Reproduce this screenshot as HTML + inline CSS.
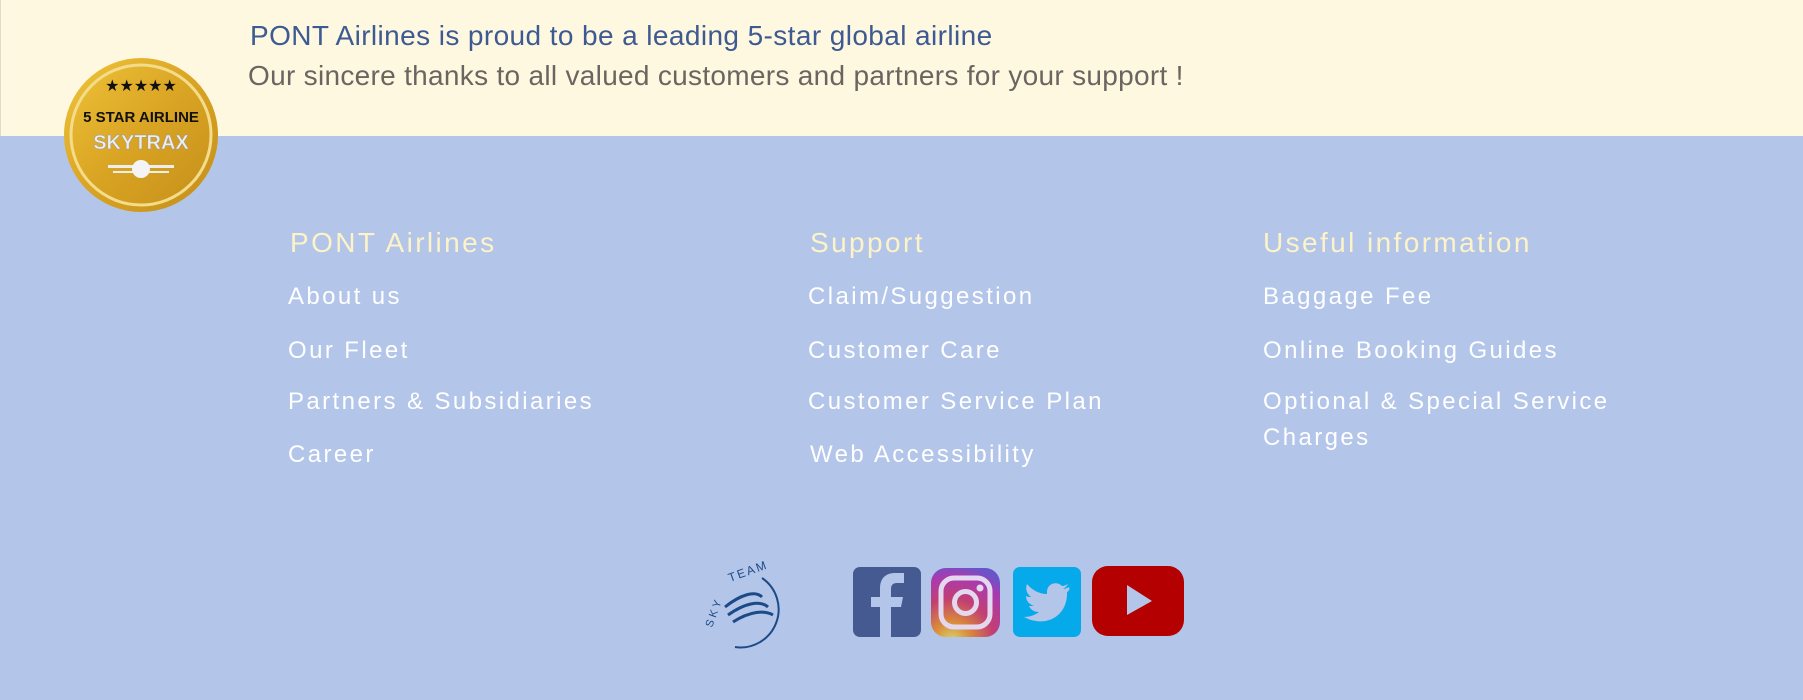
<!DOCTYPE html>
<html><head><meta charset="utf-8"><style>
body{margin:0;width:1803px;height:700px;background:#b3c5e8;font-family:"Liberation Sans",sans-serif;position:relative;overflow:hidden}
.top{position:absolute;left:0;top:0;width:1803px;height:136px;background:#fef8e0;border-left:1px solid #e0dccc;box-sizing:border-box}
.t{position:absolute;white-space:nowrap}
.h{color:#fdf3c8;font-size:28px;letter-spacing:2.4px}
.l{color:#fff;font-size:24px;letter-spacing:2.4px}
</style></head><body>
<div class="top"></div>
<div class="t" style="left:250px;top:20px;font-size:28px;color:#3e5a92;letter-spacing:0.4px">PONT Airlines is proud to be a leading 5-star global airline</div>
<div class="t" style="left:248px;top:60px;font-size:28px;color:#6a6560;letter-spacing:0.3px">Our sincere thanks to all valued customers and partners for your support !</div>

<svg style="position:absolute;left:63px;top:57px" width="156" height="156" viewBox="0 0 156 156">
<defs><linearGradient id="g" x1="0" y1="0" x2="1" y2="1"><stop offset="0" stop-color="#f0c43a"/><stop offset="0.5" stop-color="#d9a423"/><stop offset="1" stop-color="#c48e1a"/></linearGradient></defs>
<circle cx="78" cy="78" r="77" fill="url(#g)"/>
<circle cx="78" cy="78" r="70" fill="none" stroke="#f3dc8a" stroke-width="3"/>
<text x="78" y="34" text-anchor="middle" font-size="16" fill="#111">★★★★★</text>
<text x="78" y="65" text-anchor="middle" font-size="15" font-weight="bold" fill="#111">5 STAR AIRLINE</text>
<text x="78" y="92" text-anchor="middle" font-size="20" font-weight="bold" fill="#eee" stroke="#999" stroke-width="0.5">SKYTRAX</text>
<rect x="45" y="108" width="66" height="3" fill="#eee"/><rect x="50" y="114" width="56" height="2" fill="#eee"/>
<circle cx="78" cy="112" r="9" fill="#f4f4f4"/>
</svg>

<div class="t h" style="left:290px;top:227px">PONT Airlines</div>
<div class="t h" style="left:810px;top:227px">Support</div>
<div class="t h" style="left:1263px;top:227px">Useful information</div>

<div class="t l" style="left:288px;top:283px">About us</div>
<div class="t l" style="left:288px;top:337px">Our Fleet</div>
<div class="t l" style="left:288px;top:388px">Partners &amp; Subsidiaries</div>
<div class="t l" style="left:288px;top:441px">Career</div>

<div class="t l" style="left:808px;top:283px">Claim/Suggestion</div>
<div class="t l" style="left:808px;top:337px">Customer Care</div>
<div class="t l" style="left:808px;top:388px">Customer Service Plan</div>
<div class="t l" style="left:810px;top:441px">Web Accessibility</div>

<div class="t l" style="left:1263px;top:283px">Baggage Fee</div>
<div class="t l" style="left:1263px;top:337px">Online Booking Guides</div>
<div class="t l" style="left:1263px;top:388px">Optional &amp; Special Service</div>
<div class="t l" style="left:1263px;top:424px">Charges</div>

<svg style="position:absolute;left:700px;top:555px" width="100" height="95" viewBox="0 0 100 95">
<path d="M62 23 A38 38 0 0 1 35 92" fill="none" stroke="#1c4a86" stroke-width="2"/>
<text x="12" y="73" font-size="11" fill="#1c4a86" transform="rotate(-70 12 73)" letter-spacing="3">SKY</text>
<text x="30" y="27" font-size="12" fill="#1c4a86" transform="rotate(-20 30 27)" letter-spacing="2">TEAM</text>
<path d="M25 52 C40 40 55 35 62 42 M28 60 C45 48 60 45 68 52 M33 67 C50 56 65 55 73 60" fill="none" stroke="#1c4a86" stroke-width="3"/>
</svg>

<svg style="position:absolute;left:853px;top:567px" width="68" height="70" viewBox="0 0 68 70">
<rect width="68" height="70" rx="7" fill="#465a92"/>
<path d="M38 70 V40 H48 L50 30 H38 V22 C38 18 40 16 44 16 H51 V6 H42 C32 6 27 12 27 21 V30 H18 V40 H27 V70Z" fill="#b3c5e8"/>
</svg>
<svg style="position:absolute;left:931px;top:568px" width="69" height="69" viewBox="0 0 69 69">
<defs><radialGradient id="ig" cx="0.3" cy="1.05" r="1.1"><stop offset="0" stop-color="#d8d26a"/><stop offset="0.25" stop-color="#d98a3a"/><stop offset="0.55" stop-color="#c23f73"/><stop offset="0.85" stop-color="#a83ab0"/><stop offset="1" stop-color="#6a55c8"/></radialGradient></defs>
<rect width="69" height="69" rx="15" fill="url(#ig)"/>
<rect x="10" y="10" width="49" height="49" rx="13" fill="none" stroke="#e4d8f0" stroke-width="5"/>
<circle cx="34.5" cy="34.5" r="11" fill="none" stroke="#e4d8f0" stroke-width="5"/>
<circle cx="49" cy="20" r="3.5" fill="#e4d8f0"/>
</svg>
<svg style="position:absolute;left:1013px;top:567px" width="68" height="70" viewBox="0 0 68 70">
<rect width="68" height="70" rx="7" fill="#06aaea"/>
<path d="M56 20 C54 21 52 22 50 22 C52 21 54 19 55 17 C53 18 51 19 49 19 C44 14 35 16 34 24 L34 27 C26 27 19 23 14 17 C12 22 14 27 18 30 C16 30 15 30 13 29 C13 34 16 37 21 39 C19 39 18 39 16 39 C18 43 21 45 26 45 C22 48 17 50 11 50 C34 62 55 48 54 25 C56 24 57 22 56 20Z" fill="#b3c5e8"/>
</svg>
<svg style="position:absolute;left:1092px;top:566px" width="92" height="70" viewBox="0 0 92 70">
<rect width="92" height="70" rx="16" fill="#b40000"/>
<path d="M35 19 L60 35 L35 49Z" fill="#b3c5e8"/>
</svg>
</body></html>
